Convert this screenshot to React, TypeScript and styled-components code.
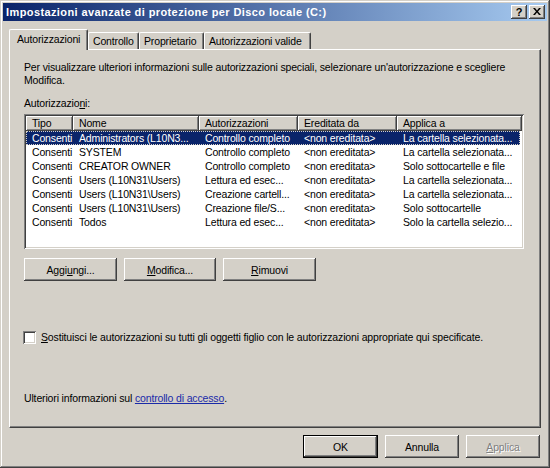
import styled, { createGlobalStyle, css } from "styled-components";

const GlobalStyle = createGlobalStyle`
  html, body {
    margin: 0;
    padding: 0;
    background: #d4d0c8;
  }
  * {
    box-sizing: border-box;
  }
`;

const raised = css`
  box-shadow: inset -1px -1px #404040, inset 1px 1px #ffffff, inset -2px -2px #808080,
    inset 2px 2px #d4d0c8;
`;

const sunken = css`
  box-shadow: inset 1px 1px #808080, inset -1px -1px #ffffff, inset 2px 2px #404040,
    inset -2px -2px #d4d0c8;
`;

type Row = {
  tipo: string;
  nome: string;
  perm: string;
  from: string;
  applies: string;
};

const ROWS: Row[] = [
  { tipo: "Consenti", nome: "Administrators (L10N3...", perm: "Controllo completo", from: "<non ereditata>", applies: "La cartella selezionata..." },
  { tipo: "Consenti", nome: "SYSTEM", perm: "Controllo completo", from: "<non ereditata>", applies: "La cartella selezionata..." },
  { tipo: "Consenti", nome: "CREATOR OWNER", perm: "Controllo completo", from: "<non ereditata>", applies: "Solo sottocartelle e file" },
  { tipo: "Consenti", nome: "Users (L10N31\\Users)", perm: "Lettura ed esec...", from: "<non ereditata>", applies: "La cartella selezionata..." },
  { tipo: "Consenti", nome: "Users (L10N31\\Users)", perm: "Creazione cartell...", from: "<non ereditata>", applies: "La cartella selezionata..." },
  { tipo: "Consenti", nome: "Users (L10N31\\Users)", perm: "Creazione file/S...", from: "<non ereditata>", applies: "Solo sottocartelle" },
  { tipo: "Consenti", nome: "Todos", perm: "Lettura ed esec...", from: "<non ereditata>", applies: "Solo la cartella selezio..." },
];

const COLUMNS = [
  { label: "Tipo", width: 47 },
  { label: "Nome", width: 126 },
  { label: "Autorizzazioni", width: 99 },
  { label: "Ereditata da", width: 99 },
  { label: "Applica a", width: 125 },
];

const TABS = [
  { label: "Autorizzazioni", width: 79 },
  { label: "Controllo", width: 51 },
  { label: "Proprietario", width: 65 },
  { label: "Autorizzazioni valide", width: 107 },
];

const App = () => {
  return (
    <>
      <GlobalStyle />
      <Dialog>
        <TitleBar>
          <Title>Impostazioni avanzate di protezione per Disco locale (C:)</Title>
          <CaptionButton>?</CaptionButton>
          <CaptionButton>
            <svg width="8" height="7" viewBox="0 0 8 7">
              <path d="M0 0h2l2 2.5L6 0h2L5 3.5 8 7H6L4 4.5 2 7H0l3-3.5z" fill="#000" />
            </svg>
          </CaptionButton>
        </TitleBar>

        <Body>
          <TabStrip>
            {TABS.map((tab, i) => (
              <Tab key={tab.label} $active={i === 0} $width={tab.width}>
                {tab.label}
              </Tab>
            ))}
          </TabStrip>

          <Panel>
            <Intro>
              Per visualizzare ulteriori informazioni sulle autorizzazioni speciali, selezionare
              un'autorizzazione e scegliere Modifica.
            </Intro>
            <Label>
              Autorizzazio<u>n</u>i:
            </Label>

            <ListView>
              <HeaderRow>
                {COLUMNS.map((col) => (
                  <HeaderCell key={col.label} $width={col.width}>
                    {col.label}
                  </HeaderCell>
                ))}
              </HeaderRow>
              {ROWS.map((row, i) => (
                <ListRow key={i} $selected={i === 0}>
                  <Cell $width={47}>{row.tipo}</Cell>
                  <Cell $width={126}>{row.nome}</Cell>
                  <Cell $width={99}>{row.perm}</Cell>
                  <Cell $width={99}>{row.from}</Cell>
                  <Cell $width={123}>{row.applies}</Cell>
                </ListRow>
              ))}
            </ListView>

            <ButtonRow>
              <Button $width={93}>
                Aggi<u>u</u>ngi...
              </Button>
              <Button $width={92}>
                <u>M</u>odifica...
              </Button>
              <Button $width={93}>
                <u>R</u>imuovi
              </Button>
            </ButtonRow>

            <CheckRow>
              <CheckBox />
              <span>
                <u>S</u>ostituisci le autorizzazioni su tutti gli oggetti figlio con le autorizzazioni
                appropriate qui specificate.
              </span>
            </CheckRow>

            <InfoLine>
              Ulteriori informazioni sul <Link>controllo di accesso</Link>.
            </InfoLine>
          </Panel>

          <Footer>
            <Button $width={75} $default>
              OK
            </Button>
            <Button $width={74}>Annulla</Button>
            <Button $width={74} $disabled>
              <u>A</u>pplica
            </Button>
          </Footer>
        </Body>
      </Dialog>
    </>
  );
};

const Dialog = styled.div`
  display: flex;
  flex-direction: column;
  width: 550px;
  height: 468px;
  padding: 3px;
  background: #d4d0c8;
  box-shadow: inset -1px -1px #404040, inset 1px 1px #d4d0c8, inset -2px -2px #808080,
    inset 2px 2px #ffffff;
  font-family: Tahoma, "Liberation Sans", Arial, sans-serif;
  font-size: 10.5px;
  letter-spacing: -0.15px;
  color: #000;
`;

const TitleBar = styled.div`
  display: flex;
  align-items: center;
  gap: 2px;
  height: 18px;
  padding: 0 2px;
  background: linear-gradient(to right, #0a246a, #a6caf0);
`;

const Title = styled.div`
  flex: 1;
  padding-left: 1px;
  color: #ffffff;
  font-weight: bold;
  font-size: 11px;
  letter-spacing: 0.4px;
  white-space: nowrap;
  overflow: hidden;
`;

const CaptionButton = styled.div`
  display: flex;
  align-items: center;
  justify-content: center;
  width: 16px;
  height: 14px;
  background: #d4d0c8;
  ${raised};
  font-weight: bold;
  font-size: 11px;
  line-height: 14px;
  padding-bottom: 1px;
`;

const Body = styled.div`
  display: flex;
  flex-direction: column;
  padding: 8px 6px 0 6px;
`;

const TabStrip = styled.div`
  display: flex;
  align-items: flex-end;
  height: 20px;
  position: relative;
  z-index: 1;
`;

const Tab = styled.div<{ $active?: boolean; $width: number }>`
  width: ${(p) => p.$width}px;
  height: ${(p) => (p.$active ? 21 : 17)}px;
  margin-bottom: ${(p) => (p.$active ? -1 : 0)}px;
  padding: ${(p) => (p.$active ? "3px 0 0 7px" : "2px 0 0 4px")};
  background: #d4d0c8;
  border-top: 1px solid #ffffff;
  border-left: 1px solid #ffffff;
  border-right: 1px solid #404040;
  border-radius: 2px 2px 0 0;
  box-shadow: inset -1px 0 #808080;
  white-space: nowrap;
  overflow: hidden;
  line-height: 13px;
`;

const Panel = styled.div`
  display: flex;
  flex-direction: column;
  height: 379px;
  padding: 11px 15px 0 14px;
  background: #d4d0c8;
  border-top: 1px solid #ffffff;
  border-left: 1px solid #ffffff;
  border-right: 1px solid #404040;
  border-bottom: 1px solid #404040;
  box-shadow: inset -1px -1px #808080;
`;

const Intro = styled.p`
  margin: 0;
  line-height: 13px;
`;

const Label = styled.div`
  margin-top: 10px;
  line-height: 13px;
`;

const ListView = styled.div`
  margin-top: 4px;
  width: 500px;
  height: 135px;
  padding: 2px;
  background: #ffffff;
  ${sunken};
`;

const HeaderRow = styled.div`
  display: flex;
  height: 15px;
`;

const HeaderCell = styled.div<{ $width: number }>`
  width: ${(p) => p.$width}px;
  height: 15px;
  padding-left: 6px;
  background: #d4d0c8;
  box-shadow: inset -1px -1px #404040, inset 1px 1px #ffffff, inset -2px -2px #808080;
  line-height: 14px;
  white-space: nowrap;
  overflow: hidden;
`;

const ListRow = styled.div<{ $selected?: boolean }>`
  display: flex;
  height: 14px;
  width: 494px;
  line-height: 14px;
  ${(p) =>
    p.$selected &&
    css`
      background: #0a246a;
      color: #ffffff;
      outline: 1px dotted #d4d0c8;
      outline-offset: -1px;
    `}
`;

const Cell = styled.div<{ $width: number }>`
  width: ${(p) => p.$width}px;
  padding-left: 6px;
  white-space: nowrap;
  overflow: hidden;
`;

const ButtonRow = styled.div`
  display: flex;
  gap: 7px;
  margin-top: 9px;
`;

const Button = styled.div<{ $width: number; $default?: boolean; $disabled?: boolean }>`
  display: flex;
  align-items: center;
  justify-content: center;
  width: ${(p) => p.$width}px;
  height: 23px;
  background: #d4d0c8;
  ${raised};
  ${(p) =>
    p.$default &&
    css`
      box-shadow: inset 0 0 0 1px #000000, inset -2px -2px #404040, inset 2px 2px #ffffff,
        inset -3px -3px #808080;
    `}
  ${(p) =>
    p.$disabled &&
    css`
      color: #808080;
      text-shadow: 1px 1px #ffffff;
    `}
`;

const CheckRow = styled.label`
  display: flex;
  align-items: center;
  gap: 5px;
  margin-top: 49px;
  margin-left: -1px;
  height: 14px;
  line-height: 13px;
`;

const CheckBox = styled.span`
  width: 13px;
  height: 13px;
  flex: none;
  background: #ffffff;
  ${sunken};
`;

const InfoLine = styled.div`
  margin-top: 48px;
  line-height: 13px;
`;

const Link = styled.span`
  color: #1a2aa8;
  text-decoration: underline;
`;

const Footer = styled.div`
  display: flex;
  justify-content: flex-end;
  gap: 7px;
  margin-top: 7px;
  padding-right: 1px;
`;

export default App;
